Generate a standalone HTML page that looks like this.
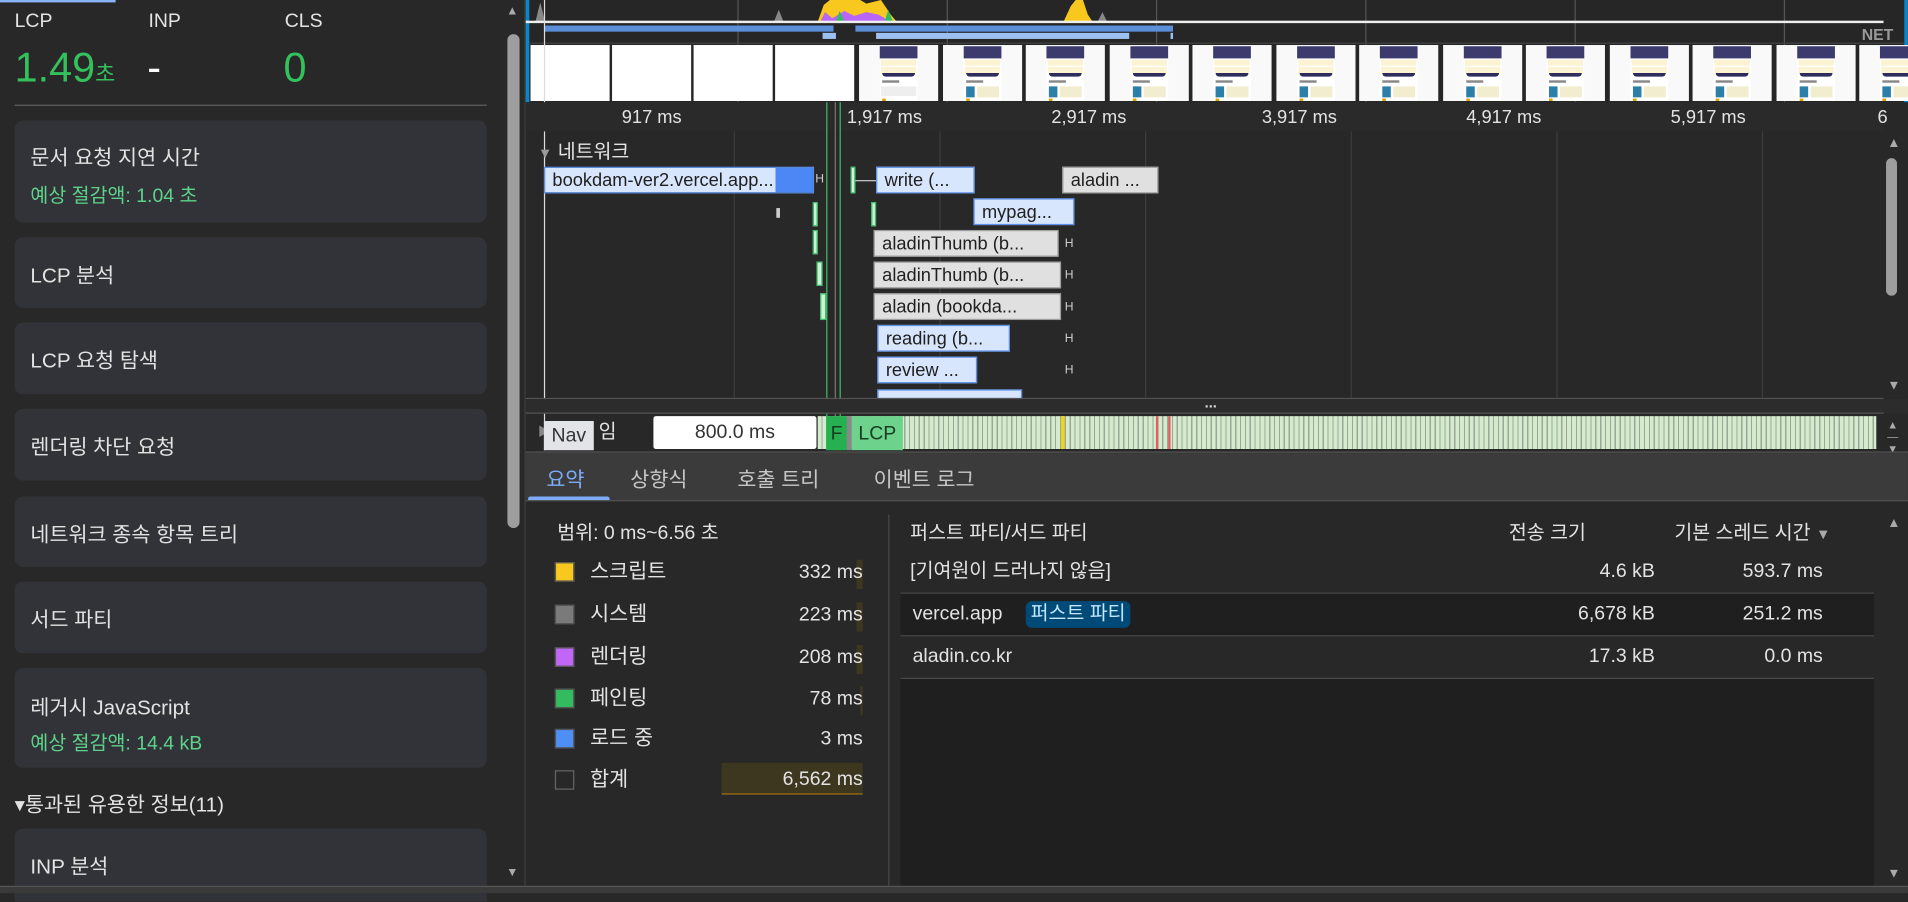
<!DOCTYPE html>
<html><head><meta charset="utf-8"><style>
html,body{margin:0;padding:0;width:1908px;height:892px;overflow:hidden;background:#282828}
#s{position:absolute;left:0;top:0;width:1568px;height:733px;transform:scale(1.2168);transform-origin:0 0;font-family:"Liberation Sans","Noto Sans CJK KR",sans-serif;color:#e3e3e3;background:#282828}
.a{position:absolute;white-space:nowrap}
.card{position:absolute;left:12px;width:388px;background:#323338;border-radius:7px}
.card .t{position:absolute;left:13px;font-size:17px;color:#e3e3e3}
.card .g{position:absolute;left:13px;font-size:16px;color:#5dd38a}
.rl{position:absolute;top:88px;font-size:15px;color:#e3e3e3}
.vg{position:absolute;top:108px;width:1px;height:220px;background:#3c3c3c}
.bar{position:absolute;height:22px;font-size:15px;line-height:22px;color:#1f1f1f;padding-left:6px;box-sizing:border-box;overflow:hidden;white-space:nowrap}
.bl{background:#d7e5fd;border:1px solid #5b8fe8}
.gr{background:#e0e0e0;border:1px solid #9e9e9e}
.wh{position:absolute;font-size:10px;color:#ccc}
.fr{position:absolute;top:37px;width:65px;height:46px;background:#f9f9f9}
.ph{position:absolute;left:17px;top:1px;width:31px;height:45px;background:#fff}
.ph i{position:absolute;display:block}
.lg{position:absolute;left:456px;width:16px;height:16px;border:1px solid #555;box-sizing:border-box}
.lt{position:absolute;left:485px;font-size:17px;line-height:20px;white-space:nowrap}
.lv{position:absolute;right:859px;font-size:16px;line-height:20px;text-align:right;white-space:nowrap}
.tr{position:absolute;left:740px;width:800px;height:35px;border-bottom:1px solid #4a4a4a;box-sizing:border-box}
.tr span{position:absolute;top:7px;font-size:16px;line-height:20px;white-space:nowrap}
</style></head><body><div id="s">

<div class="a" style="left:0;top:0;width:95px;height:2px;background:#8ab4f8"></div>
<div class="a" style="left:12px;top:9px;font-size:16px">LCP</div>
<div class="a" style="left:122px;top:9px;font-size:16px">INP</div>
<div class="a" style="left:234px;top:9px;font-size:16px">CLS</div>
<div class="a" style="left:12px;top:37px;font-size:34px;color:#34c15c">1.49<span style="font-size:18px">초</span></div>
<div class="a" style="left:121px;top:37px;font-size:34px;color:#fff">-</div>
<div class="a" style="left:233px;top:37px;font-size:34px;color:#34c15c">0</div>
<div class="a" style="left:12px;top:86px;width:388px;height:1px;background:#5f5f5f"></div>

<div class="card" style="top:99px;height:84px"><div class="t" style="top:16px">문서 요청 지연 시간</div><div class="g" style="top:48px">예상 절감액: 1.04 초</div></div>
<div class="card" style="top:195px;height:58px"><div class="t" style="top:17px">LCP 분석</div></div>
<div class="card" style="top:265px;height:59px"><div class="t" style="top:17px">LCP 요청 탐색</div></div>
<div class="card" style="top:336px;height:59px"><div class="t" style="top:17px">렌더링 차단 요청</div></div>
<div class="card" style="top:408px;height:58px"><div class="t" style="top:17px">네트워크 종속 항목 트리</div></div>
<div class="card" style="top:478px;height:59px"><div class="t" style="top:17px">서드 파티</div></div>
<div class="card" style="top:549px;height:82px"><div class="t" style="top:18px">레거시 JavaScript</div><div class="g" style="top:48px">예상 절감액: 14.4 kB</div></div>
<div class="a" style="left:12px;top:647px;font-size:17px">▾통과된 유용한 정보(11)</div>
<div class="card" style="top:681px;height:60px;border-radius:7px 7px 0 0"><div class="t" style="top:17px">INP 분석</div></div>

<div class="a" style="left:416px;top:4px;color:#aaa;font-size:10px">▲</div>
<div class="a" style="left:417px;top:28px;width:10px;height:406px;background:#9e9e9e;border-radius:5px"></div>
<div class="a" style="left:416px;top:712px;color:#aaa;font-size:10px">▼</div>
<div class="a" style="left:431px;top:0;width:1px;height:733px;background:#3e3e3e"></div>

<div class="a" style="left:432px;top:0;width:1136px;height:84px;background:#262626"></div>
<div class="a" style="left:432px;top:0;width:3px;height:84px;background:#0b84c9"></div>
<div class="a" style="left:1565px;top:0;width:3px;height:84px;background:#0b84c9"></div>
<div class="a" style="left:606px;top:0;width:1px;height:84px;background:#555"></div>
<div class="a" style="left:778px;top:0;width:1px;height:84px;background:#555"></div>
<div class="a" style="left:950px;top:0;width:1px;height:84px;background:#555"></div>
<div class="a" style="left:1122px;top:0;width:1px;height:84px;background:#555"></div>
<div class="a" style="left:1294px;top:0;width:1px;height:84px;background:#555"></div>
<div class="a" style="left:1466px;top:0;width:1px;height:84px;background:#555"></div>
<svg class="a" style="left:432px;top:0" width="1116" height="20">
<path d="M8 18 L12 2 L16 18 Z" fill="#888"/>
<path d="M204 18 L208 8 L212 18 Z" fill="#888"/>
<path d="M240 18 L245 4 L250 0 L275 0 L280 3 L292 0 L300 12 L305 18 Z" fill="#f9c81e"/>
<path d="M242 18 L246 10 L252 15 L262 9 L270 13 L280 10 L290 12 L300 18 Z" fill="#b866f5"/>
<path d="M255 18 L258 9 L262 18 Z M295 18 L298 8 L302 18Z" fill="#2fbd5e"/>
<path d="M442 18 L448 5 L452 0 L458 0 L462 12 L466 18 Z" fill="#f9c81e"/>
<path d="M470 18 L474 10 L478 18Z" fill="#888"/>
<rect x="0" y="17" width="1116" height="2" fill="#eee"/>
</svg>
<div class="a" style="left:447px;top:21px;width:238px;height:5px;background:#5b8fd8"></div>
<div class="a" style="left:703px;top:21px;width:261px;height:5px;background:#5b8fd8"></div>
<div class="a" style="left:676px;top:27px;width:11px;height:5px;background:#9cc1f0"></div>
<div class="a" style="left:720px;top:27px;width:208px;height:5px;background:#9cc1f0"></div>
<div class="a" style="left:962px;top:27px;width:2px;height:5px;background:#9cc1f0"></div>
<div class="a" style="left:1527px;top:21px;font-size:13px;font-weight:bold;color:#999;background:#262626;padding:0 3px">NET</div>
<div class="a" style="left:435px;top:35px;width:1130px;height:1px;background:#444"></div>

<div class="fr" style="left:436px;background:#fff"></div>
<div class="fr" style="left:503px;background:#fff"></div>
<div class="fr" style="left:570px;background:#fff"></div>
<div class="fr" style="left:637px;background:#fff"></div>
<div id="thumbs"></div>
<div class="a" style="left:447px;top:0;width:1px;height:370px;background:#ddd"></div>

<div class="a" style="left:432px;top:84px;width:1116px;height:24px;background:#2a2a2a"></div>
<div class="rl" style="left:511px">917 ms</div>
<div class="rl" style="left:696px">1,917 ms</div>
<div class="rl" style="left:864px">2,917 ms</div>
<div class="rl" style="left:1037px">3,917 ms</div>
<div class="rl" style="left:1205px">4,917 ms</div>
<div class="rl" style="left:1373px">5,917 ms</div>
<div class="rl" style="left:1543px">6</div>
<div class="vg" style="left:603px"></div><div class="vg" style="left:772px"></div><div class="vg" style="left:941px"></div><div class="vg" style="left:1110px"></div><div class="vg" style="left:1279px"></div><div class="vg" style="left:1448px"></div>

<div class="a" style="left:442px;top:111px;font-size:16px"><span style="color:#999;font-size:12px">▼</span> 네트워크</div>
<div class="bar bl" style="left:447px;top:137px;width:222px;background:linear-gradient(90deg,#d7e5fd 86%,#4b87f5 86%)">bookdam-ver2.vercel.app...</div>
<div class="wh" style="left:670px;top:142px">H</div>
<div class="a" style="left:699px;top:137px;width:4px;height:22px;background:#d0f0d8;border:1px solid #3cbf6a;box-sizing:border-box"></div>
<div class="a" style="left:703px;top:148px;width:17px;height:1px;background:#ccc"></div>
<div class="bar bl" style="left:720px;top:137px;width:81px">write (...</div>
<div class="bar gr" style="left:873px;top:137px;width:79px">aladin ...</div>
<div class="bar bl" style="left:800px;top:163px;width:83px">mypag...</div>
<div class="bar gr" style="left:718px;top:189px;width:152px">aladinThumb (b...</div>
<div class="bar gr" style="left:718px;top:215px;width:154px">aladinThumb (b...</div>
<div class="bar gr" style="left:718px;top:241px;width:154px">aladin (bookda...</div>
<div class="bar bl" style="left:721px;top:267px;width:109px">reading (b...</div>
<div class="bar bl" style="left:721px;top:293px;width:82px">review ...</div>
<div class="bar bl" style="left:721px;top:320px;width:119px;height:8px"></div>
<div class="wh" style="left:875px;top:195px">H</div><div class="wh" style="left:875px;top:221px">H</div><div class="wh" style="left:875px;top:247px">H</div><div class="wh" style="left:875px;top:273px">H</div><div class="wh" style="left:875px;top:299px">H</div>
<div class="a" style="left:668px;top:166px;width:4px;height:20px;background:#d0f0d8;border:1px solid #3cbf6a;box-sizing:border-box"></div>
<div class="a" style="left:668px;top:189px;width:4px;height:20px;background:#d0f0d8;border:1px solid #3cbf6a;box-sizing:border-box"></div>
<div class="a" style="left:671px;top:215px;width:5px;height:20px;background:#d0f0d8;border:1px solid #3cbf6a;box-sizing:border-box"></div>
<div class="a" style="left:674px;top:241px;width:5px;height:22px;background:#d0f0d8;border:1px solid #3cbf6a;box-sizing:border-box"></div>
<div class="a" style="left:716px;top:166px;width:4px;height:20px;background:#d0f0d8;border:1px solid #3cbf6a;box-sizing:border-box"></div>
<div class="a" style="left:638px;top:171px;width:3px;height:8px;background:#ccc"></div>
<div class="a" style="left:679px;top:84px;width:1px;height:286px;background:#3cbf6a"></div>
<div class="a" style="left:690px;top:84px;width:1px;height:286px;background:#3cbf6a"></div>
<div class="a" style="left:686px;top:84px;width:1px;height:286px;background:#777"></div>

<div class="a" style="left:1551px;top:112px;color:#aaa;font-size:11px">▲</div>
<div class="a" style="left:1550px;top:130px;width:9px;height:113px;background:#9e9e9e;border-radius:5px"></div>
<div class="a" style="left:1551px;top:311px;color:#aaa;font-size:11px">▼</div>

<div class="a" style="left:432px;top:327px;width:1116px;height:1px;background:#555"></div>
<div class="a" style="left:432px;top:328px;width:1136px;height:12px;background:#2c2c2c"></div>
<div class="a" style="left:990px;top:324px;font-size:12px;color:#ddd;font-weight:bold">...</div>
<div class="a" style="left:432px;top:339px;width:1116px;height:1px;background:#555"></div>

<div class="a" style="left:442px;top:346px;color:#888;font-size:10px">▶</div>
<div class="a" style="left:447px;top:346px;width:41px;height:24px;background:#e3e4e8;color:#333;font-size:16px;text-align:center;line-height:26px">Nav</div>
<div class="a" style="left:492px;top:341px;font-size:16px">임</div>
<div class="a" style="left:537px;top:342px;width:134px;height:27px;background:#fff;color:#333;font-size:16px;text-align:center;line-height:27px;border-radius:2px">800.0 ms</div>
<div class="a" style="left:672px;top:342px;width:870px;height:27px;background:repeating-linear-gradient(90deg,#d4eccd 0,#d4eccd 3px,#9aa897 3px,#9aa897 4px)"></div>
<div class="a" style="left:872px;top:342px;width:3px;height:27px;background:#f3d21b"></div>
<div class="a" style="left:950px;top:342px;width:2px;height:27px;background:#e06060"></div>
<div class="a" style="left:960px;top:342px;width:2px;height:27px;background:#e06060"></div>
<div class="a" style="left:679px;top:342px;width:17px;height:28px;background:#27b04f;color:#1a3d22;font-size:16px;text-align:center;line-height:30px">F</div>
<div class="a" style="left:696px;top:342px;width:4px;height:28px;background:#888"></div>
<div class="a" style="left:700px;top:342px;width:42px;height:28px;background:#6cd28c;color:#1a3d22;font-size:16px;text-align:center;line-height:30px">LCP</div>
<div class="a" style="left:1551px;top:344px;color:#aaa;font-size:9px;line-height:10px">▲<br>—<br>▼</div>

<div class="a" style="left:432px;top:371px;width:1136px;height:1px;background:#555"></div>
<div class="a" style="left:432px;top:372px;width:1136px;height:39px;background:#3b3b3b"></div>
<div class="a" style="left:449px;top:380px;font-size:17px;color:#7cacf8">요약</div>
<div class="a" style="left:518px;top:380px;font-size:17px;color:#c7c7c7">상향식</div>
<div class="a" style="left:606px;top:380px;font-size:17px;color:#c7c7c7">호출 트리</div>
<div class="a" style="left:718px;top:380px;font-size:17px;color:#c7c7c7">이벤트 로그</div>
<div class="a" style="left:434px;top:408px;width:67px;height:3px;background:#7cacf8;border-radius:2px 2px 0 0"></div>
<div class="a" style="left:432px;top:411px;width:1136px;height:1px;background:#555"></div>

<div class="a" style="left:458px;top:429px;font-size:16px;line-height:20px">범위: 0 ms~6.56 초</div>
<div class="a" style="left:704px;top:460px;width:5px;height:24px;background:#3e3720"></div>
<div class="a" style="left:704px;top:495px;width:5px;height:24px;background:#3e3720"></div>
<div class="a" style="left:704px;top:530px;width:5px;height:24px;background:#3e3720"></div>
<div class="a" style="left:707px;top:564px;width:2px;height:24px;background:#3e3720"></div>
<div class="lg" style="top:462px;background:#f9c81e"></div><div class="lt" style="top:460px">스크립트</div><div class="lv" style="top:461px">332 ms</div>
<div class="lg" style="top:497px;background:#7a7a7a"></div><div class="lt" style="top:495px">시스템</div><div class="lv" style="top:496px">223 ms</div>
<div class="lg" style="top:532px;background:#c166f7"></div><div class="lt" style="top:530px">렌더링</div><div class="lv" style="top:531px">208 ms</div>
<div class="lg" style="top:566px;background:#33bb5f"></div><div class="lt" style="top:564px">페인팅</div><div class="lv" style="top:565px">78 ms</div>
<div class="lg" style="top:599px;background:#4d8ff5"></div><div class="lt" style="top:597px">로드 중</div><div class="lv" style="top:598px">3 ms</div>
<div class="lg" style="top:633px;background:transparent;border-color:#666"></div><div class="lt" style="top:631px">합계</div>
<div class="a" style="left:593px;top:627px;width:116px;height:25px;background:#3e3720;border-bottom:1px solid #a07010"></div>
<div class="lv" style="top:631px">6,562 ms</div>
<div class="a" style="left:730px;top:423px;width:1px;height:305px;background:#4a4a4a"></div>

<div class="a" style="left:740px;top:557px;width:800px;height:171px;background:#1f1f1f"></div>
<div class="a" style="left:748px;top:429px;font-size:16px;line-height:20px">퍼스트 파티/서드 파티</div>
<div class="a" style="left:1240px;top:429px;font-size:16px;line-height:20px">전송 크기</div>
<div class="a" style="left:1376px;top:429px;font-size:16px;line-height:20px">기본 스레드 시간 <span style="color:#aaa;font-size:12px">▼</span></div>
<div class="tr" style="top:453px"><span style="left:8px">[기여원이 드러나지 않음]</span><span style="right:180px">4.6 kB</span><span style="right:42px">593.7 ms</span></div>
<div class="tr" style="top:488px;background:#1f1f1f"><span style="left:10px">vercel.app</span><span style="left:103px;top:6px;background:#004a77;color:#c2e7ff;border-radius:5px;padding:0 4px;font-size:16px;line-height:22px">퍼스트 파티</span><span style="right:180px">6,678 kB</span><span style="right:42px">251.2 ms</span></div>
<div class="tr" style="top:523px"><span style="left:10px">aladin.co.kr</span><span style="right:180px">17.3 kB</span><span style="right:42px">0.0 ms</span></div>
<div class="a" style="left:1551px;top:424px;color:#aaa;font-size:11px">▲</div>
<div class="a" style="left:1551px;top:712px;color:#aaa;font-size:11px">▼</div>
<div class="a" style="left:0;top:728px;width:1568px;height:5px;background:#3a3a3a;border-top:1px solid #555"></div>
</div>
<script>
var h='';for(var i=0;i<13;i++){var x=706+i*68.5;h+='<div class="fr" style="left:'+x+'px"><div class="ph"><i style="left:0;top:0;width:31px;height:10px;background:#3d3b6e"></i><i style="left:1px;top:11px;width:29px;height:5px;background:#fbf3d2"></i><i style="left:1px;top:17px;width:29px;height:5px;background:#fbf3d2"></i><i style="left:2px;top:22px;width:27px;height:3px;background:#2f2d5e;border-radius:0 0 14px 14px"></i><i style="left:2px;top:28px;width:14px;height:2px;background:#888"></i>'+(i>0?'<i style="left:2px;top:33px;width:7px;height:9px;background:#2c7fa8"></i><i style="left:11px;top:33px;width:18px;height:9px;background:#f3edd0"></i>':'<i style="left:1px;top:33px;width:29px;height:8px;background:#eee"></i>')+'<i style="left:2px;top:43px;width:3px;height:2px;background:#d9a400"></i></div></div>';}
document.getElementById('thumbs').innerHTML=h;
</script>
</body></html>
